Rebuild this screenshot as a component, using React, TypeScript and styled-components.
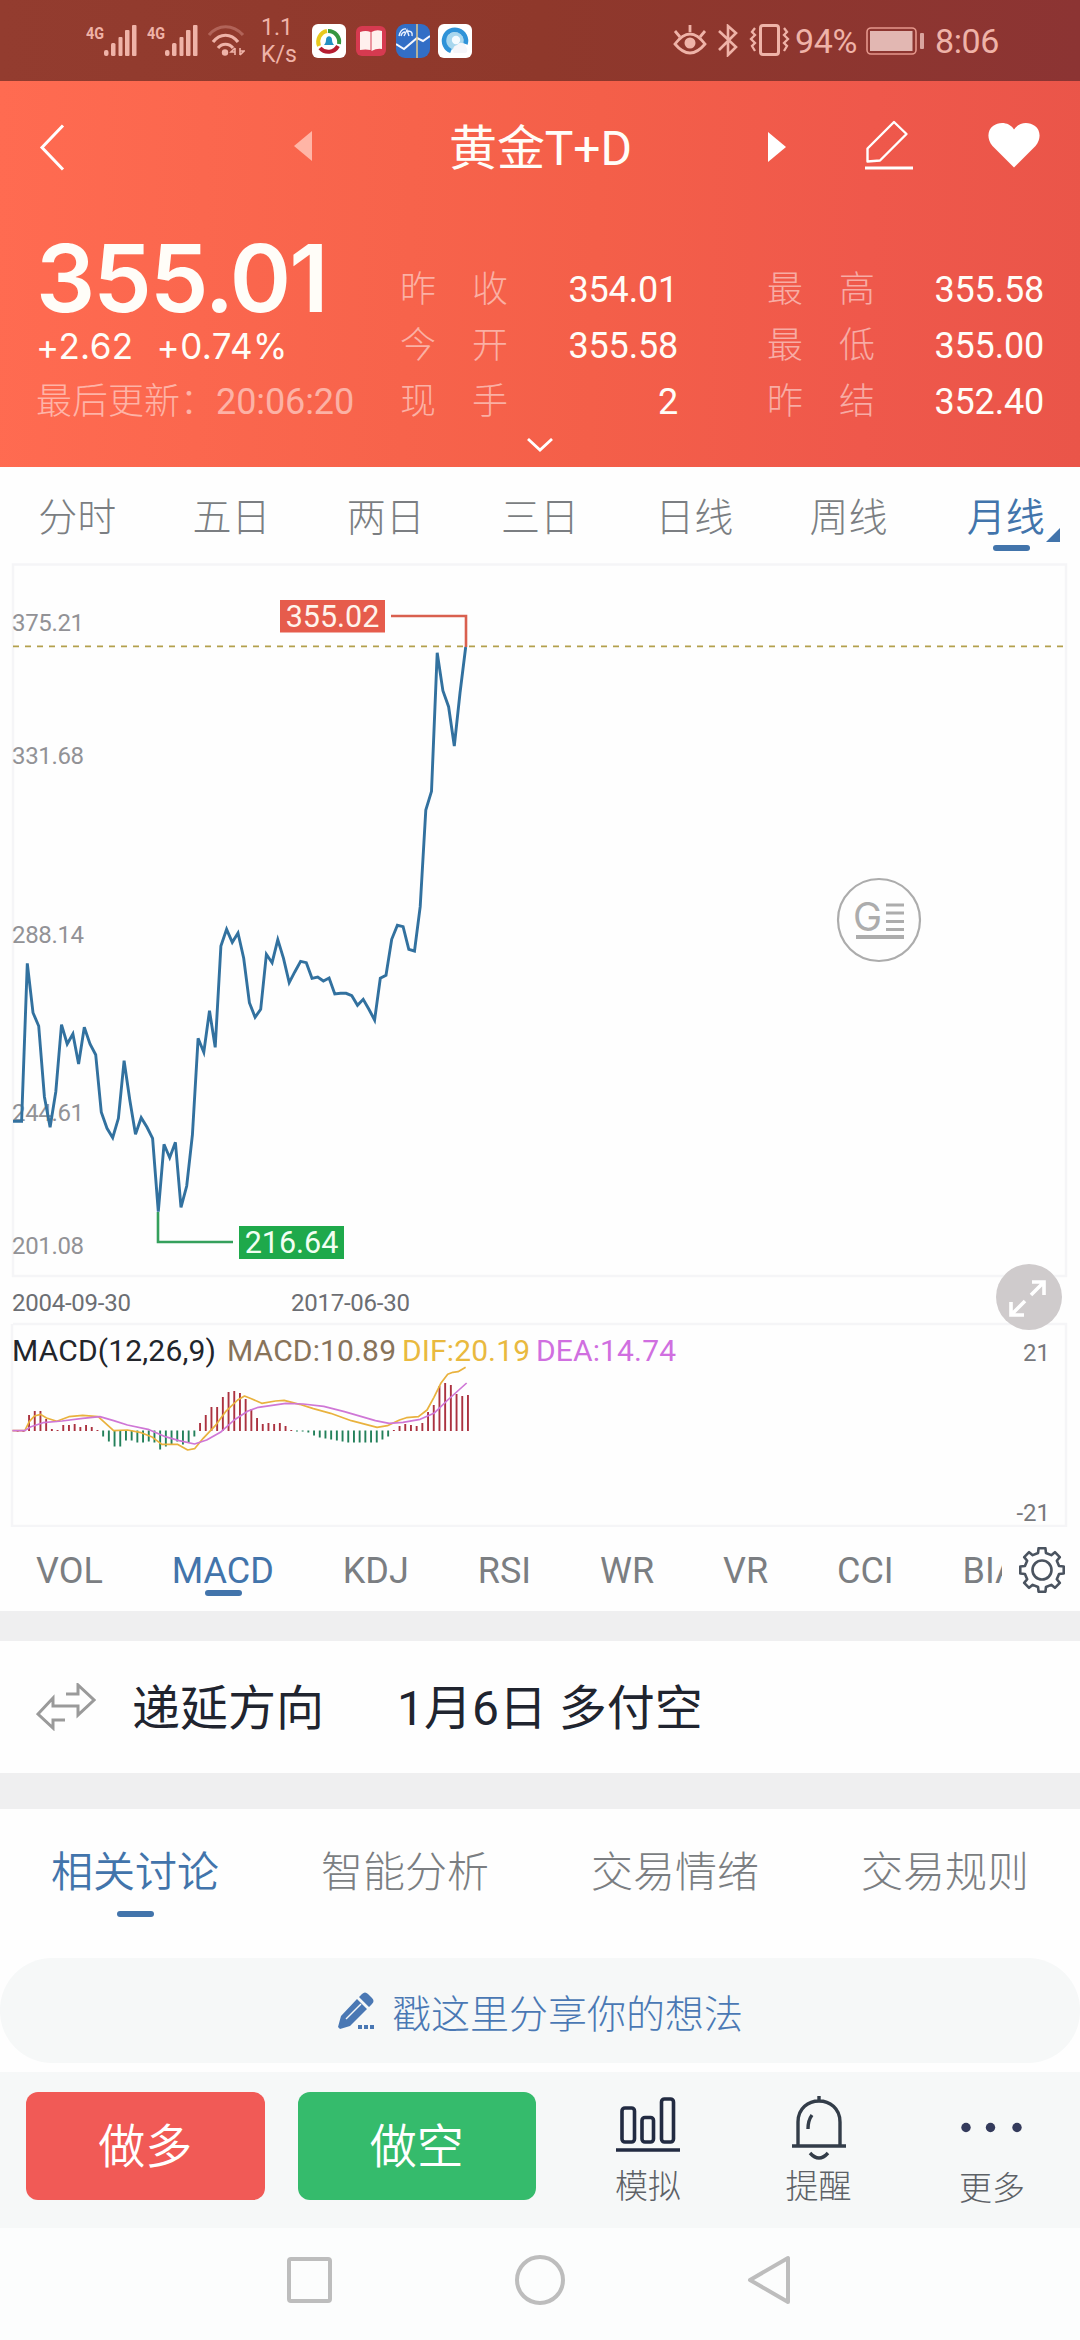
import React from 'react';
import styled, { createGlobalStyle } from 'styled-components';

const Global = createGlobalStyle`
  * { box-sizing: border-box; }
  body { margin: 0; background: #fdfdfd; }
  svg { display: block; flex: none; }
`;

const FONT = "Roboto, 'Noto Sans CJK SC', sans-serif";
const BLUE = '#4274ab';
const GRAY = '#7b7e82';
const SOFT = '#f5f5f7';

const Screen = styled.main`
  width: 1080px;
  height: 2340px;
  overflow: hidden;
  display: flex;
  flex-direction: column;
  background: #fefefe;
  font-family: ${FONT};
  color: #20242c;
`;

/* ---------- status bar ---------- */
const StatusBar = styled.div`
  height: 81px;
  flex: none;
  display: flex;
  align-items: flex-start;
  background: linear-gradient(90deg, #933c2f 0%, #8f382b 50%, #8c3433 100%);
  color: #efb3a8;
`;
const Slot = styled.div<{ $l: number; $t: number }>`
  margin-left: ${(p) => p.$l}px;
  margin-top: ${(p) => p.$t}px;
  white-space: nowrap;
`;
const Speed = styled(Slot)`
  width: 36px;
  font-size: 23px;
  line-height: 26.5px;
`;
const StatusText = styled(Slot)<{ $w: number }>`
  width: ${(p) => p.$w}px;
  font-size: 34px;
  line-height: 40px;
  letter-spacing: -0.4px;
`;

const Signal = () => (
  <svg width="52" height="34" viewBox="0 0 52 34" fill="#efb3a8">
    <text x="0" y="15" fontSize="17" fontWeight="700" textLength="18" lengthAdjust="spacingAndGlyphs" fontFamily="Roboto">4G</text>
    <rect x="18" y="26" width="4.5" height="6" rx="2" />
    <rect x="25" y="19" width="4.5" height="13" rx="1.5" />
    <rect x="32.500" y="13" width="4" height="19" rx="1" />
    <rect x="39" y="6" width="4.500" height="26" rx="1" />
    <rect x="46" y="1" width="4.500" height="31" rx="1" />
  </svg>
);

const Wifi = () => (
  <svg width="37" height="32" viewBox="0 0 37 32" fill="none" stroke="#efb3a8" strokeWidth="3.2">
    <path d="M1 10C10-1 25-1 35 10" opacity=".35" />
    <path d="M5 17C12 8 23 8 30 17" />
    <path d="M10 23C14 18 21 18 25 23" />
    <circle cx="17" cy="27.500" r="3.200" fill="#efb3a8" stroke="none" />
    <path d="M27 23v7M27 23l-4 4h4M32 30v-7M32 30l4-4h-4" strokeWidth="1.600" />
  </svg>
);

const BallApp = () => (
  <svg width="34" height="34" viewBox="0 0 34 34">
    <rect width="34" height="34" rx="6" fill="#fff" />
    <g fill="none" strokeWidth="4">
      <path d="M7 22A11 11 0 0 1 15 7" stroke="#e8c81e" />
      <path d="M16 7A11 11 0 0 1 27 20" stroke="#35963f" />
      <path d="M26 22A11 11 0 0 1 8 24" stroke="#b51d31" />
    </g>
    <path d="M12 21c1-1 2-3 2-5 0-5 6-5 6 0 0 2 1 4 2 5z" fill="#2390c2" />
  </svg>
);
const BookApp = () => (
  <svg width="30" height="30" viewBox="0 0 30 30">
    <rect width="30" height="30" rx="6" fill="#d63a50" />
    <path d="M4 6q6-2 10.500 0v18q-5-1-10.500 0zM15.500 6q5-3 10.500-1v18q-5-1-10.500 2z" fill="#fff0ee" />
  </svg>
);
const TrendApp = () => (
  <svg width="34" height="34" viewBox="0 0 34 34">
    <rect width="34" height="34" rx="9" fill="#326ec6" />
    <path d="M0 20l8 5 13-11 6 3 7-5" stroke="#f5f8ff" strokeWidth="2" fill="none" />
    <path d="M21 0v34" stroke="#dfc98e" strokeWidth="1.500" />
    <path d="M3 12q2-8 7-7M5 12q1-4 4-4M8 12l3-6 2 6M12 7q5 0 4 5" stroke="#e9f1ff" strokeWidth="1.400" fill="none" />
  </svg>
);
const CloudApp = () => (
  <svg width="34" height="34" viewBox="0 0 34 34">
    <rect width="34" height="34" rx="6" fill="#fff" />
    <circle cx="17" cy="17" r="9" fill="#a8d7ee" />
    <path d="M13 27A11 11 0 1 1 27.500 20" fill="none" stroke="#2f93d8" strokeWidth="4.500" />
    <circle cx="18" cy="16" r="4.200" fill="#f4fbff" />
    <path d="M16 29a5 5 0 0 1 3-8 5 5 0 0 1 9 2 4 4 0 0 1 0 6z" fill="#f4f6fa" />
  </svg>
);
const Eye = () => (
  <svg width="34" height="30" viewBox="0 0 34 30" fill="none" stroke="#efb3a8" strokeWidth="2.800">
    <path d="M2 19Q17-1 32 19Q17 37 2 19z" />
    <circle cx="17" cy="18" r="5.500" fill="#efb3a8" stroke="none" />
    <path d="M17 0v7M2 6l5 6M32 6l-5 6" />
  </svg>
);
const Bluetooth = () => (
  <svg width="20" height="33" viewBox="0 0 20 33" fill="none" stroke="#efb3a8" strokeWidth="2.600">
    <path d="M1 7l17 16-8 8V2l8 7L1 26" />
  </svg>
);
const Vibrate = () => (
  <svg width="41" height="32" viewBox="0 0 41 32" fill="none" stroke="#efb3a8" strokeWidth="2.600">
    <rect x="11.500" y="1.500" width="18" height="29" rx="2.500" strokeWidth="3" />
    <path d="M6 4l-3 4 3 3-4 4 4 4-3 3 3 5M35 4l3 4-3 3 4 4-4 4 3 3-3 5" strokeWidth="2.300" />
  </svg>
);
const Battery = () => (
  <svg width="59" height="28" viewBox="0 0 59 28">
    <rect x="1" y="1" width="49" height="26" rx="4" fill="none" stroke="#e5978c" strokeWidth="1.600" />
    <rect x="4" y="4" width="42.500" height="20" fill="#e2b7b2" />
    <rect x="54" y="6" width="4" height="16" rx="1" fill="#d9a49e" />
  </svg>
);

/* ---------- quote header ---------- */
const Header = styled.header`
  height: 386px;
  flex: none;
  background: linear-gradient(92deg, #ff6b51 0%, #f7634b 38%, #f45f49 55%, #ef584b 80%, #ea5549 100%);
  color: #fffdf8;
`;
const NavRow = styled.div`
  height: 132px;
  display: flex;
  align-items: flex-start;
`;
const Title = styled(Slot)`
  width: 180px;
  font-size: 48px;
  line-height: 60px;
  letter-spacing: -0.1px;
`;
const Quote = styled.div`
  display: flex;
  height: 212px;
  padding: 0 36px;
`;
const PriceCol = styled.div`
  width: 364px;
  white-space: nowrap;
`;
const Price = styled.div`
  margin-top: 21px;
  height: 84px;
  font: 570 93px/88px Inter, sans-serif;
  letter-spacing: -1.8px;
`;
const Change = styled.div`
  display: flex;
  gap: 23px;
  height: 56px;
  font: 400 35px/56px Inter, sans-serif;
  letter-spacing: 0.4px;
`;
const Updated = styled.div`
  font-size: 36px;
  line-height: 56px;
  font-weight: 300;
  color: rgba(255, 255, 255, 0.5);
  span { font-weight: 400; letter-spacing: -0.1px; }
`;
const Stats = styled.dl`
  margin: 49px 0 0;
  flex: 1;
  display: grid;
  grid-template-columns: 278px 277px;
  grid-auto-rows: 56px;
  justify-content: space-between;
`;
const Stat = styled.div`
  display: flex;
  justify-content: space-between;
  font-size: 36px;
  line-height: 56px;
  dt { font-weight: 300; color: rgba(255, 255, 255, 0.5); white-space: pre; }
  dd { margin: 0; letter-spacing: -0.2px; }
`;
const Fold = styled.div`
  display: flex;
  justify-content: center;
  padding-top: 13px;
`;

/* ---------- tabs ---------- */
const PeriodTabs = styled.nav`
  height: 96px;
  flex: none;
  display: grid;
  grid-template-columns: repeat(7, 1fr);
`;
const Period = styled.div<{ $on?: boolean }>`
  position: relative;
  text-align: center;
  padding-left: ${(p) => (p.$on ? 6 : 0)}px;
  font-size: 39px;
  font-weight: ${(p) => (p.$on ? 350 : 300)};
  line-height: 102px;
  color: ${(p) => (p.$on ? BLUE : GRAY)};
`;
const Corner = styled.i`
  position: absolute;
  right: 20px;
  top: 61px;
  border-left: 14px solid transparent;
  border-bottom: 14px solid ${BLUE};
`;
const Underline = styled.i<{ $b: number; $shift?: number }>`
  position: absolute;
  width: 37px;
  height: 6px;
  border-radius: 3px;
  background: ${BLUE};
  left: calc(50% - 18px + ${(p) => p.$shift ?? 0}px);
  bottom: ${(p) => p.$b}px;
`;

/* ---------- chart ---------- */
const ChartArea = styled.section`
  position: relative;
  height: 964px;
  flex: none;
`;
const Expand = styled.button`
  position: absolute;
  left: 996px;
  top: 701px;
  width: 66px;
  height: 66px;
  border: 0;
  padding: 0;
  border-radius: 50%;
  background: #cfcbcc;
`;

const IndicatorBar = styled.nav`
  height: 84px;
  flex: none;
  display: flex;
`;
const IndicatorList = styled.div`
  width: 1002px;
  padding-left: 36px;
  display: flex;
  gap: 68.9px;
  overflow: hidden;
`;
const Indicator = styled.div<{ $on?: boolean }>`
  position: relative;
  font-size: 36px;
  line-height: 88px;
  color: ${(p) => (p.$on ? BLUE : GRAY)};
`;

const Divider = styled.div<{ $h: number }>`
  height: ${(p) => p.$h}px;
  flex: none;
  background: #efeff0;
`;

const DeferRow = styled.section`
  height: 132px;
  flex: none;
  display: flex;
  align-items: center;
  padding-left: 36px;
  font-size: 48px;
  line-height: 60px;
  color: #20242f;
`;
const DeferText = styled.span<{ $l?: number; $w?: number }>`
  margin: 3px 0 0 ${(p) => p.$l ?? 0}px;
  width: ${(p) => (p.$w ? `${p.$w}px` : 'auto')};
`;

const SectionTabs = styled.nav`
  height: 149px;
  flex: none;
  display: grid;
  grid-template-columns: repeat(4, 1fr);
`;
const SectionTab = styled.div<{ $on?: boolean }>`
  position: relative;
  text-align: center;
  font-size: 42px;
  font-weight: ${(p) => (p.$on ? 350 : 300)};
  line-height: 127px;
  color: ${(p) => (p.$on ? BLUE : GRAY)};
`;

const ShareBox = styled.div`
  height: 105px;
  flex: none;
  margin-bottom: 9px;
  border-radius: 52px;
  background: #f6f8f8;
  display: flex;
  align-items: center;
  justify-content: center;
  gap: 17px;
  font-size: 39px;
  font-weight: 300;
  color: #4a78b4;
`;

const ActionBar = styled.footer`
  height: 156px;
  flex: none;
  background: #f6f8f8;
  display: flex;
  align-items: flex-start;
  padding: 20px 0 0 26px;
`;
const Trade = styled.button<{ $bg: string }>`
  flex: none;
  width: 238.500px;
  height: 108px;
  margin-right: 33px;
  border: 0;
  border-radius: 12px;
  background: ${(p) => p.$bg};
  color: #fff;
  font: 350 47px/110px ${FONT};
  padding: 0;
`;
const Tool = styled.div<{ $w: number; $drop?: number }>`
  flex: none;
  width: ${(p) => p.$w}px;
  display: flex;
  flex-direction: column;
  align-items: center;
  font-size: 33px;
  font-weight: 300;
  color: #5d6166;
  svg { height: 72px; }
  span { line-height: 46px; margin-top: ${(p) => p.$drop ?? 0}px; }
`;

const SystemNav = styled.div`
  height: 112px;
  flex: none;
  display: flex;
  justify-content: center;
  align-items: center;
  gap: 180px;
  padding-bottom: 8px;
  background: #fcfdfd;
`;

/* ---------- data ---------- */
const closes = [
  1121.3, 1121.3, 963.3, 1012.7, 1026, 1096.7, 1127.3, 1091.7, 1024.7, 1044, 1034, 1064, 1027.3, 1044, 1054.7, 1112.3,
  1128.3, 1137.7, 1118.3, 1060.7, 1100, 1134.3, 1117.7, 1127, 1138.3, 1211.7, 1144.3, 1157.7, 1142.3, 1207.3, 1186, 1135,
  1038.3, 1052.3, 1010.7, 1047.3, 946, 929.3, 942.3, 933, 958.3, 1002.7, 1017.3, 1009.3, 954.3, 962.7, 939.7, 958.3,
  982.7, 971.7, 961.3, 962.7, 978.3, 977, 981, 978, 994, 993.3, 993.3, 995.7, 1005.3, 999.3, 1009.3, 1020,
  978.3, 975.3, 939.3, 925.3, 926.7, 949.3, 951, 906.7, 810, 791.3, 652.7, 690.7, 706.7, 746, 693, 647,
];
const histogram = [
  0, 0, 16, 20, 20, 12, 2, 1, 6, 6, 7, 4, 6, 4, 1, -6, -11, -16, -16, -10, -10, -12, -12, -11, -12, -19, -16, -14, -11,
  -14, -12, -6, 8, 16, 24, 24, 34, 39, 40, 38, 32, 22, 13, 7, 8, 7, 8, 5, 1, -1, -1, -2, -5, -7, -8, -9, -10, -11, -12,
  -12, -12, -12, -12, -12, -9, -6, 1, 5, 7, 6, 5, 8, 19, 26, 45, 48, 46, 37, 35, 36,
];
const dif =
  '36,512 72,512 85,485 100,468 118,463 135,474 165,484 200,470 240,466 285,470 330,512 370,510 410,518 440,530 470,553 515,553 545,570 565,566 590,535 625,497 655,455 690,420 710,408 730,416 760,430 800,423 825,421 870,433 910,446 960,460 1020,482 1095,502 1125,497 1160,480 1180,473 1215,470 1240,450 1260,412 1280,370 1300,343 1315,337 1330,335 1352,322';
const dea =
  '36,512 72,512 90,500 125,488 180,483 240,475 290,470 330,482 370,495 430,508 480,530 520,542 565,552 600,540 640,517 680,480 720,453 750,442 790,436 830,430 880,432 940,439 1000,455 1090,482 1130,490 1170,487 1220,478 1260,460 1300,420 1355,369';

const axis: [string, number][] = [
  ['375.21', 631], ['331.68', 764], ['288.14', 943], ['244.61', 1121], ['201.08', 1254],
];

const Chart = () => {
  const line = '13,1121.3 ' + closes.map((y, i) => `${(15.95 + i * 5.693).toFixed(1)},${y}`).join(' ');
  return (
    <svg width="1080" height="964" viewBox="0 563 1080 964" fontFamily={FONT}>
      <g fill="none" stroke={SOFT} strokeWidth="2.500">
        <path d="M13 564.500H1066V1276H13z" />
        <path d="M13 1324H1066V1526H12V1324" />
      </g>
      <g fontSize="24" fill="#929296">
        {axis.map(([t, y]) => (
          <text key={t} x="12" y={y} letterSpacing="-0.350">{t}</text>
        ))}
      </g>
      <path d="M13 646.300H1066" stroke="#b3a04c" strokeWidth="1.700" strokeDasharray="6 6" />
      <polyline points={line} fill="none" stroke="#32719f" strokeWidth="2.900" strokeLinejoin="miter" />
      <path d="M391 616H466V647" fill="none" stroke="#d9604f" strokeWidth="2.600" />
      <rect x="280" y="600" width="105" height="32.500" fill="#e65c4c" />
      <text x="332.500" y="627" fontSize="30.500" fill="#fff4ec" textAnchor="middle">355.02</text>
      <path d="M158 1212V1242H233" fill="none" stroke="#35a05c" strokeWidth="2.600" />
      <rect x="239" y="1226" width="105" height="33" fill="#1ea94b" />
      <text x="291.500" y="1253" fontSize="30.500" fill="#f1fff2" textAnchor="middle">216.64</text>

      <g stroke="#acacac" fill="none">
        <circle cx="879" cy="920" r="41" strokeWidth="2.200" />
        <path d="M886 905h18M886 913h18M886 921.500h18M886 929.500h18" strokeWidth="3.200" />
        <path d="M856 937h48" strokeWidth="4" />
      </g>
      <text x="853" y="931" fontSize="39" fontWeight="400" fill="#acacac" fontFamily="Inter, sans-serif">G</text>

      <g fontSize="24" fill="#6c6e73" letterSpacing="-0.250">
        <text x="12" y="1311">2004-09-30</text>
        <text x="291" y="1311">2017-06-30</text>
      </g>
      <g fontSize="24" fill="#77787c" textAnchor="end">
        <text x="1050" y="1361">21</text>
        <text x="1050" y="1521">-21</text>
      </g>
      <g fontSize="30">
        <text x="12" y="1361" fill="#22252b" textLength="204">MACD(12,26,9)</text>
        <text x="227" y="1361" fill="#88735a" textLength="169">MACD:10.89</text>
        <text x="402" y="1361" fill="#e9b93f" textLength="128">DIF:20.19</text>
        <text x="536" y="1361" fill="#d06fe0" textLength="140">DEA:14.74</text>
      </g>
      {histogram.map((h, i) => (
        <rect
          key={i}
          x={16.7 + i * 5.7}
          y={h >= 0 ? 1431 - h : 1430.5}
          width="1.900"
          height={Math.max(Math.abs(h), 1)}
          fill={h >= 0 ? '#ab3240' : '#23805a'}
        />
      ))}
      <g transform="translate(0 1260) scale(.34439 .33333)" fill="none" strokeWidth="5" strokeLinejoin="round">
        <polyline points={dif} stroke="#e9b23e" />
        <polyline points={dea} stroke="#cf77d6" />
      </g>
    </svg>
  );
};

const gearPath = (() => {
  const pts: string[] = [];
  for (let i = 0; i < 8; i++) {
    const base = i * 45 - 90;
    [[-13, 17.5], [-9, 22], [9, 22], [13, 17.5]].forEach(([a, r]) => {
      const ang = ((base + a) * Math.PI) / 180;
      pts.push(`${(23 + r * Math.cos(ang)).toFixed(2)} ${(23 + r * Math.sin(ang)).toFixed(2)}`);
    });
  }
  return 'M' + pts.join('L') + 'z';
})();

const stats: [string, string][] = [
  ['昨　收', '354.01'], ['最　高', '355.58'],
  ['今　开', '355.58'], ['最　低', '355.00'],
  ['现　手', '2'], ['昨　结', '352.40'],
];

export default function App() {
  return (
    <Screen>
      <Global />
      <StatusBar>
        <Slot $l={86} $t={24}><Signal /></Slot>
        <Slot $l={9} $t={24}><Signal /></Slot>
        <Slot $l={9} $t={25}><Wifi /></Slot>
        <Speed $l={16} $t={15}>1.1<br />K/s</Speed>
        <Slot $l={15} $t={24}><BallApp /></Slot>
        <Slot $l={10} $t={26}><BookApp /></Slot>
        <Slot $l={10} $t={24}><TrendApp /></Slot>
        <Slot $l={8} $t={24}><CloudApp /></Slot>
        <Slot $l={201} $t={25}><Eye /></Slot>
        <Slot $l={11} $t={24}><Bluetooth /></Slot>
        <Slot $l={11} $t={24}><Vibrate /></Slot>
        <StatusText $l={5} $t={21} $w={64}>94%</StatusText>
        <Slot $l={7} $t={27}><Battery /></Slot>
        <StatusText $l={10} $t={21} $w={66}>8:06</StatusText>
      </StatusBar>

      <Header>
        <NavRow>
          <Slot $l={39} $t={43}>
            <svg width="26" height="47" viewBox="0 0 26 47" fill="none" stroke="#fff" strokeWidth="3">
              <path d="M24 1.500L3 23.500 24 45.500" />
            </svg>
          </Slot>
          <Slot $l={229} $t={50}>
            <svg width="18" height="30" viewBox="0 0 18 30"><path d="M18 0v30L0 15z" fill="#ffb5a6" /></svg>
          </Slot>
          <Title $l={137} $t={38}>黄金T+D</Title>
          <Slot $l={139} $t={51}>
            <svg width="18" height="30" viewBox="0 0 18 30"><path d="M0 0v30L18 15z" fill="#fff" /></svg>
          </Slot>
          <Slot $l={78} $t={38}>
            <svg width="49" height="52" viewBox="0 0 49 52" fill="none" stroke="#fff" strokeWidth="2.400" strokeLinejoin="round">
              <path d="M30 3L3.500 29.500V42.500L16 41.500 42.500 15z" />
              <path d="M1 49h48" strokeWidth="3" />
            </svg>
          </Slot>
          <Slot $l={75} $t={42}>
            <svg width="52" height="45" viewBox="0 0 52 45">
              <path d="M26 44.500L4.500 23C-1.500 16-.5 7 5 3 11.500-1.500 21-1 26 6.500 31-1 40.500-1.500 47 3c5.500 4 6.500 13 .5 20z" fill="#fff" />
            </svg>
          </Slot>
        </NavRow>
        <Quote>
          <PriceCol>
            <Price>355.01</Price>
            <Change><span>+2.62</span><span>+0.74%</span></Change>
            <Updated>最后更新：<span>20:06:20</span></Updated>
          </PriceCol>
          <Stats>
            {stats.map(([k, v], i) => (
              <Stat key={i}><dt>{k}</dt><dd>{v}</dd></Stat>
            ))}
          </Stats>
        </Quote>
        <Fold>
          <svg width="26" height="14" viewBox="0 0 26 14" fill="none" stroke="#fff" strokeWidth="2.800">
            <path d="M1 1l12 11L25 1" />
          </svg>
        </Fold>
      </Header>

      <PeriodTabs>
        {['分时', '五日', '两日', '三日', '日线', '周线'].map((t) => <Period key={t}>{t}</Period>)}
        <Period $on>月线<Corner /><Underline $b={18} $shift={8} /></Period>
      </PeriodTabs>

      <ChartArea>
        <Chart />
        <Expand>
          <svg width="66" height="66" viewBox="0 0 66 66" fill="none" stroke="#fff" strokeWidth="3.600">
            <path d="M35 31L48 18M36 18H48V31M29 37L15 51M15 38V51H28" />
          </svg>
        </Expand>
      </ChartArea>

      <IndicatorBar>
        <IndicatorList>
          {['VOL', 'MACD', 'KDJ', 'RSI', 'WR', 'VR', 'CCI', 'BIAS'].map((t) => (
            <Indicator key={t} $on={t === 'MACD'}>
              {t}
              {t === 'MACD' && <Underline $b={15} />}
            </Indicator>
          ))}
        </IndicatorList>
        <Slot $l={17} $t={20}>
          <svg width="46" height="46" viewBox="0 0 46 46" fill="none" stroke="#4a535f" strokeWidth="2.600" strokeLinejoin="round">
            <path d={gearPath} />
            <circle cx="23" cy="23" r="9.500" />
          </svg>
        </Slot>
      </IndicatorBar>

      <Divider $h={30} />
      <DeferRow>
        <svg width="60" height="48" viewBox="0 0 60 48" fill="none" stroke="#9a9a9a" strokeWidth="3">
          <path d="M30 11H42V2L58 17 42 32V23H17V15L2 31 17 45V37H29" />
        </svg>
        <DeferText $l={36} $w={265}>递延方向</DeferText>
        <DeferText>1月6日 多付空</DeferText>
      </DeferRow>
      <Divider $h={36} />

      <SectionTabs>
        <SectionTab $on>相关讨论<Underline $b={41} /></SectionTab>
        <SectionTab>智能分析</SectionTab>
        <SectionTab>交易情绪</SectionTab>
        <SectionTab>交易规则</SectionTab>
      </SectionTabs>

      <ShareBox>
        <svg width="38" height="40" viewBox="0 0 38 40" fill="#4a78b4">
          <path d="M25 3q3-3 6 0l4 4q3 3 0 6l-3 3-10-10zM20 8l10 10-17 17-10 3-2-2 3-11zM21 34h4v4h-4zM27 34h4v4h-4zM33 34h4v4h-4z" />
          <path d="M9 28L24 13" stroke="#f6f8f8" strokeWidth="1.500" />
        </svg>
        <span>戳这里分享你的想法</span>
      </ShareBox>

      <ActionBar>
        <Trade $bg="#f15a56">做多</Trade>
        <Trade $bg="#35bb6c">做空</Trade>
        <Tool $w={158}>
          <svg width="64" height="72" viewBox="0 0 64 72" fill="none" stroke="#222b42" strokeWidth="3.600">
            <rect x="6" y="16" width="12.500" height="34" rx="3" />
            <rect x="26" y="25.500" width="11.500" height="24.500" rx="3" />
            <rect x="45.500" y="7" width="12" height="43" rx="3" />
            <path d="M0 58h64" />
          </svg>
          <span>模拟</span>
        </Tool>
        <Tool $w={183}>
          <svg width="56" height="72" viewBox="0 0 56 72" fill="none" stroke="#333d49" strokeWidth="3.400">
            <path d="M7 54V30C7 2 49 2 49 30V54M28 4v6M1 54H55" />
            <path d="M17 37c0-7 1-10 4-14M19 61q9 10 18 0" />
          </svg>
          <span>提醒</span>
        </Tool>
        <Tool $w={164} $drop={2}>
          <svg width="64" height="72" viewBox="0 0 64 72" fill="#343b5c">
            <circle cx="6" cy="35.500" r="4.700" /><circle cx="30.500" cy="35.500" r="4.700" /><circle cx="57" cy="35.500" r="4.700" />
          </svg>
          <span>更多</span>
        </Tool>
      </ActionBar>

      <SystemNav>
        <svg width="50" height="50" viewBox="0 0 50 50" fill="none" stroke="#bdbdbd" strokeWidth="4">
          <rect x="4" y="4" width="41" height="42" rx="2" />
        </svg>
        <svg width="50" height="50" viewBox="0 0 50 50" fill="none" stroke="#bdbdbd" strokeWidth="4">
          <circle cx="25" cy="25" r="23" />
        </svg>
        <svg width="50" height="50" viewBox="0 0 50 50" fill="none" stroke="#bdbdbd" strokeWidth="4" strokeLinejoin="round">
          <path d="M43 3V47L5 25z" />
        </svg>
      </SystemNav>
    </Screen>
  );
}
